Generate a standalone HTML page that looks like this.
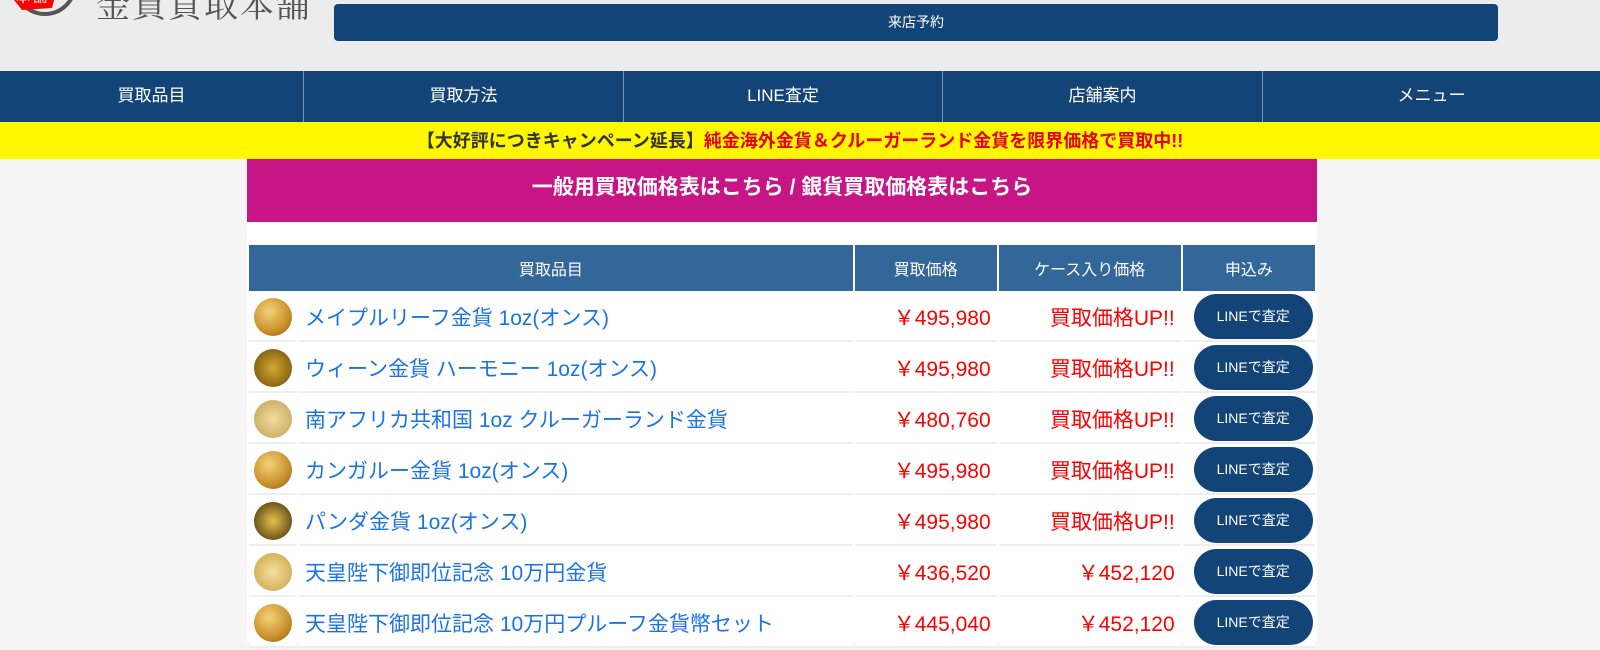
<!DOCTYPE html>
<html><head><meta charset="utf-8"><style>
*{margin:0;padding:0;box-sizing:border-box}
body{width:1600px;height:636px;overflow:hidden;background:#f5f5f5;font-family:"Liberation Sans","Noto Sans CJK JP",sans-serif}
.hdr{position:absolute;left:0;top:0;width:1600px;height:71px;background:#ececec}
.logo{position:absolute;left:0;top:-30px;width:80px;height:52px}
.title{position:absolute;left:96px;top:-22px;font-size:34px;color:#555;font-family:"Noto Serif CJK SC",serif;letter-spacing:2px}
.resv{position:absolute;left:334px;top:4px;width:1164px;height:37px;background:#134477;border-radius:4px;color:#fff;font-size:14px;text-align:center;line-height:36px}
.nav{position:absolute;left:0;top:71px;width:1600px;height:51px;background:#134477;display:flex}
.nav div{color:#fff;font-size:17px;text-align:center;line-height:50px;border-left:1px solid #7f95b0}
.nav div:first-child{border-left:none}
.yel{position:absolute;left:0;top:122px;width:1600px;height:37px;background:#fff700;text-align:center;font-size:18px;font-weight:bold;line-height:38px;color:#333}
.yel span{color:#e60012}
.mag{position:absolute;left:247px;top:159px;width:1070px;height:63px;background:#c71585;color:#fff;font-weight:bold;font-size:21px;text-align:center;line-height:58px}
.wrap{position:absolute;left:247px;top:222px;width:1070px;height:420px;background:#fff}
table{position:absolute;left:0;top:21px;border-spacing:2px;width:1070px}
th{background:#336699;color:#fff;font-weight:normal;font-size:16px;height:46px}
td{height:49px;font-size:21px;background:#fff;border-bottom:2px solid #eee}
td.n{color:#1a73e8;padding-left:6px}
td.p{color:#f00;text-align:right;padding-right:6px}
.coin{width:38px;height:38px;border-radius:50%;background:radial-gradient(circle at 40% 35%,#f4d27a,#c8902a 60%,#8a5a10);margin:0 auto}
.btn{width:119px;height:45px;border-radius:23px;background:#134477;color:#fff;font-size:14px;text-align:center;line-height:45px;margin-left:11px}
</style></head><body>
<div class="hdr">
<svg class="logo" viewBox="0 0 80 52"><circle cx="45" cy="14" r="30" fill="none" stroke="#555" stroke-width="4"/><path d="M6 20 L26 12 L58 16 L52 38 L22 40 Z" fill="#f00"/><text x="16" y="32" fill="#fff" font-size="14" font-family="Noto Sans CJK JP">本 舗</text></svg>
<div class="title">金貨買取本舗</div>
<div class="resv">来店予約</div>
</div>
<div class="nav"><div style="width:303px">買取品目</div><div style="width:320px">買取方法</div><div style="width:319px">LINE査定</div><div style="width:320px">店舗案内</div><div style="width:338px">メニュー</div></div>
<div class="yel">【大好評につきキャンペーン延長】<span>純金海外金貨＆クルーガーランド金貨を限界価格で買取中!!</span></div>
<div class="mag">一般用買取価格表はこちら / 銀貨買取価格表はこちら</div>
<div class="wrap"><table>
<tr><th colspan="2" style="width:594px">買取品目</th><th style="width:142px">買取価格</th><th style="width:182px">ケース入り価格</th><th>申込み</th></tr>
<tr><td style="width:48px"><div class="coin"></div></td><td class="n">メイプルリーフ金貨 1oz(オンス)</td><td class="p">￥495,980</td><td class="p">買取価格UP!!</td><td><div class="btn">LINEで査定</div></td></tr>
<tr><td><div class="coin" style="background:radial-gradient(circle,#d4a830,#6a4a08)"></div></td><td class="n">ウィーン金貨 ハーモニー 1oz(オンス)</td><td class="p">￥495,980</td><td class="p">買取価格UP!!</td><td><div class="btn">LINEで査定</div></td></tr>
<tr><td><div class="coin" style="background:radial-gradient(circle,#f0dca0,#c0a050)"></div></td><td class="n">南アフリカ共和国 1oz クルーガーランド金貨</td><td class="p">￥480,760</td><td class="p">買取価格UP!!</td><td><div class="btn">LINEで査定</div></td></tr>
<tr><td><div class="coin"></div></td><td class="n">カンガルー金貨 1oz(オンス)</td><td class="p">￥495,980</td><td class="p">買取価格UP!!</td><td><div class="btn">LINEで査定</div></td></tr>
<tr><td><div class="coin" style="background:radial-gradient(circle,#e8c050,#3a2a05)"></div></td><td class="n">パンダ金貨 1oz(オンス)</td><td class="p">￥495,980</td><td class="p">買取価格UP!!</td><td><div class="btn">LINEで査定</div></td></tr>
<tr><td><div class="coin" style="background:radial-gradient(circle,#f4e0a0,#c8a040)"></div></td><td class="n">天皇陛下御即位記念 10万円金貨</td><td class="p">￥436,520</td><td class="p">￥452,120</td><td><div class="btn">LINEで査定</div></td></tr>
<tr><td><div class="coin"></div></td><td class="n">天皇陛下御即位記念 10万円プルーフ金貨幣セット</td><td class="p">￥445,040</td><td class="p">￥452,120</td><td><div class="btn">LINEで査定</div></td></tr>
</table></div>
</body></html>
